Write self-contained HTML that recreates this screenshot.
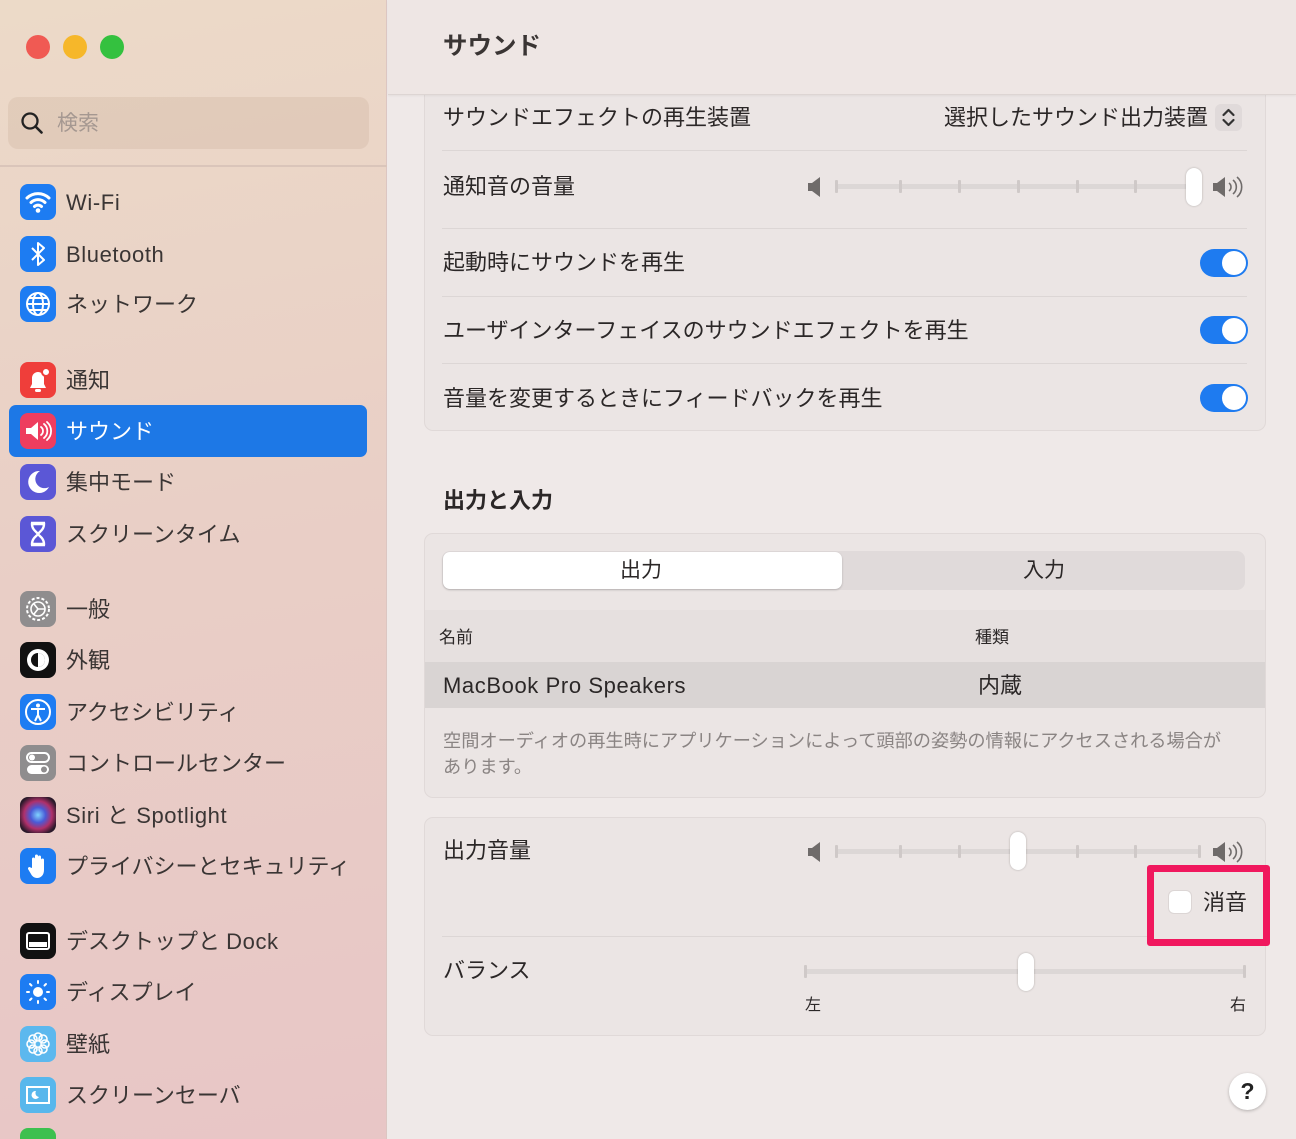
<!DOCTYPE html>
<html style="overflow:hidden;width:1296px;height:1139px"><head><meta charset="utf-8">
<style>
*{margin:0;padding:0;box-sizing:border-box}
body{width:1296px;height:1139px;overflow:hidden;position:relative;background:#efe9e8;font-family:"Liberation Sans","Noto Sans CJK JP",sans-serif;color:#2b2727}
.a{position:absolute}
#side{left:0;top:0;width:387px;height:1139px;background:linear-gradient(170deg,#ecdac8 0%,#e9cfc6 45%,#e8c6c6 100%);border-right:1px solid #dcc6c2}
.dot{width:24px;height:24px;border-radius:50%;top:35px}
.it{left:0;width:387px;height:40px}
.ic{position:absolute;left:20px;top:2px;width:36px;height:36px;border-radius:8px;overflow:hidden}
.ic svg{width:36px;height:36px}
.lb{position:absolute;left:66px;top:1px;line-height:40px;font-size:22px;color:#3a3534;white-space:nowrap}
.lat{letter-spacing:0.6px}
.card{background:#ebe5e4;border:1px solid #e0d9d8;border-radius:9px}
.t{font-size:22px;line-height:30px;white-space:nowrap;color:#2b2727}
.hr{height:1px;background:#dcd6d5;left:442px;width:805px}
.tog{width:48px;height:28px;border-radius:14px;background:#1e7bf0;left:1200px}
.tog::after{content:"";position:absolute;right:2px;top:2px;width:24px;height:24px;border-radius:50%;background:#fff}
.track{height:5px;background:#dcd7d6;border-radius:3px}
.tick{width:3px;height:13px;background:#cfc9c8;border-radius:1px}
.knob{width:16px;height:38px;background:#fff;border-radius:8px;box-shadow:0 0 2px rgba(0,0,0,.25)}
</style></head><body>
<div id="side" class="a"></div>
<div class="a dot" style="left:26px;background:#f05a53"></div>
<div class="a dot" style="left:63px;background:#f6b72a"></div>
<div class="a dot" style="left:100px;background:#34c13f"></div>
<div class="a" style="left:8px;top:97px;width:361px;height:52px;border-radius:10px;background:rgba(160,120,100,.13)"></div>
<svg class="a" style="left:19px;top:110px" width="26" height="26" viewBox="0 0 26 26"><circle cx="11" cy="11" r="7.5" fill="none" stroke="#222" stroke-width="2.3"/><path d="M16.5 16.5l6 6" stroke="#222" stroke-width="2.6" stroke-linecap="round"/></svg>
<div class="a" style="left:57px;top:110px;font-size:21px;line-height:28px;color:#a59891">検索</div>
<div class="a" style="left:0;top:165px;width:387px;height:2px;background:#dac5ba"></div>

<div class="a" style="left:9px;top:405px;width:358px;height:52px;border-radius:7px;background:#1d78e6"></div>

<div class="a it" style="top:182px"><div class="ic" style="background:#1d7cf2"><svg viewBox="0 0 36 36"><path d="M7 14a16 16 0 0 1 22 0M11 18.5a10 10 0 0 1 14 0M14.5 22.5a5 5 0 0 1 7 0" fill="none" stroke="#fff" stroke-width="3" stroke-linecap="round"/><circle cx="18" cy="26.5" r="2.3" fill="#fff"/></svg></div><div class="lb lat">Wi-Fi</div></div>
<div class="a it" style="top:234px"><div class="ic" style="background:#1d7cf2"><svg viewBox="0 0 36 36"><path d="M12 12l12 12-6 5V7l6 5-12 12" fill="none" stroke="#fff" stroke-width="2" stroke-linejoin="round"/></svg></div><div class="lb lat">Bluetooth</div></div>
<div class="a it" style="top:284px"><div class="ic" style="background:#1d7cf2"><svg viewBox="0 0 36 36"><g fill="none" stroke="#fff" stroke-width="2"><circle cx="18" cy="18" r="11"/><ellipse cx="18" cy="18" rx="5" ry="11"/><path d="M7 18h22M9 12h18M9 24h18"/></g></svg></div><div class="lb">ネットワーク</div></div>
<div class="a it" style="top:360px"><div class="ic" style="background:#ef3e3a"><svg viewBox="0 0 36 36"><path d="M10 26h16l-2-4v-6a6 6 0 0 0-12 0v6z" fill="#fff"/><circle cx="26" cy="10" r="4" fill="#fff" stroke="#ef3e3a" stroke-width="2"/><rect x="15" y="27" width="6" height="3" rx="1.5" fill="#fff"/></svg></div><div class="lb">通知</div></div>
<div class="a it" style="top:411px"><div class="ic" style="background:#ee3d5f"><svg viewBox="0 0 36 36"><path d="M6 15h5l7-6v18l-7-6H6z" fill="#fff"/><path d="M21 14a5 5 0 0 1 0 8M24 11a9 9 0 0 1 0 14M27 9a12 12 0 0 1 0 18" fill="none" stroke="#fff" stroke-width="1.8" stroke-linecap="round"/></svg></div><div class="lb" style="color:#fff">サウンド</div></div>
<div class="a it" style="top:462px"><div class="ic" style="background:#5b57d6"><svg viewBox="0 0 36 36"><path d="M20 7a11 11 0 1 0 9 16A9 9 0 0 1 20 7z" fill="#fff"/></svg></div><div class="lb">集中モード</div></div>
<div class="a it" style="top:514px"><div class="ic" style="background:#5b57d6"><svg viewBox="0 0 36 36"><path d="M11 7h14M11 29h14M12 8c0 6 5 8 6 10-1 2-6 4-6 10h12c0-6-5-8-6-10 1-2 6-4 6-10z" fill="none" stroke="#fff" stroke-width="2.4"/></svg></div><div class="lb">スクリーンタイム</div></div>
<div class="a it" style="top:589px"><div class="ic" style="background:#8f8d8e"><svg viewBox="0 0 36 36"><circle cx="18" cy="18" r="11" fill="none" stroke="#fff" stroke-width="2" stroke-dasharray="3 2"/><circle cx="18" cy="18" r="7" fill="none" stroke="#fff" stroke-width="1.6"/><path d="M18 18l-4-5M18 18h7M18 18l-4 5" stroke="#fff" stroke-width="1.6"/></svg></div><div class="lb">一般</div></div>
<div class="a it" style="top:640px"><div class="ic" style="background:#111"><svg viewBox="0 0 36 36"><circle cx="18" cy="18" r="11" fill="#fff"/><circle cx="18" cy="18" r="7" fill="#111"/><path d="M18 11a7 7 0 0 1 0 14z" fill="#fff"/></svg></div><div class="lb">外観</div></div>
<div class="a it" style="top:692px"><div class="ic" style="background:#1d7cf2"><svg viewBox="0 0 36 36"><circle cx="18" cy="18" r="12" fill="none" stroke="#fff" stroke-width="2"/><circle cx="18" cy="11.5" r="2" fill="#fff"/><path d="M11 15h14M18 15v6l-3 6M18 21l3 6" stroke="#fff" stroke-width="2" fill="none"/></svg></div><div class="lb">アクセシビリティ</div></div>
<div class="a it" style="top:743px"><div class="ic" style="background:#8f8d8e"><svg viewBox="0 0 36 36"><rect x="7" y="8" width="22" height="9" rx="4.5" fill="none" stroke="#fff" stroke-width="2"/><circle cx="12" cy="12.5" r="3" fill="#fff"/><rect x="7" y="20" width="22" height="9" rx="4.5" fill="#fff"/><circle cx="24" cy="24.5" r="3" fill="#8f8d8e"/></svg></div><div class="lb">コントロールセンター</div></div>
<div class="a it" style="top:795px"><div class="ic" style="background:radial-gradient(circle at 50% 50%,#7fd3ff 0%,#4a5ad6 30%,#b0306a 55%,#2a1a2a 80%)"></div><div class="lb lat">Siri と Spotlight</div></div>
<div class="a it" style="top:846px"><div class="ic" style="background:#1d7cf2"><svg viewBox="0 0 36 36"><path d="M12 20V11a1.5 1.5 0 0 1 3 0v7V8a1.5 1.5 0 0 1 3 0v10V9a1.5 1.5 0 0 1 3 0v10-7a1.5 1.5 0 0 1 3 0v10c0 5-3 8-7 8-3 0-5-2-6-4l-3-5a1.5 1.5 0 0 1 2.5-1.5z" fill="#fff"/></svg></div><div class="lb">プライバシーとセキュリティ</div></div>
<div class="a it" style="top:921px"><div class="ic" style="background:#111"><svg viewBox="0 0 36 36"><rect x="7" y="10" width="22" height="16" rx="2" fill="none" stroke="#fff" stroke-width="2"/><rect x="9" y="19" width="18" height="5" fill="#fff"/></svg></div><div class="lb">デスクトップと <span class="lat">Dock</span></div></div>
<div class="a it" style="top:972px"><div class="ic" style="background:#1d7cf2"><svg viewBox="0 0 36 36"><circle cx="18" cy="18" r="5" fill="#fff"/><g stroke="#fff" stroke-width="2" stroke-linecap="round"><path d="M18 7v2M18 27v2M7 18h2M27 18h2M10 10l1.5 1.5M24.5 24.5L26 26M10 26l1.5-1.5M24.5 11.5L26 10"/></g></svg></div><div class="lb">ディスプレイ</div></div>
<div class="a it" style="top:1024px"><div class="ic" style="background:#5cb8ee"><svg viewBox="0 0 36 36"><g fill="none" stroke="#fff" stroke-width="1.6"><circle cx="18" cy="11" r="4"/><circle cx="18" cy="25" r="4"/><circle cx="11" cy="18" r="4"/><circle cx="25" cy="18" r="4"/><circle cx="13" cy="13" r="4"/><circle cx="23" cy="23" r="4"/><circle cx="23" cy="13" r="4"/><circle cx="13" cy="23" r="4"/></g></svg></div><div class="lb">壁紙</div></div>
<div class="a it" style="top:1075px"><div class="ic" style="background:#58b7ec"><svg viewBox="0 0 36 36"><rect x="7" y="10" width="22" height="16" fill="none" stroke="#fff" stroke-width="2"/><path d="M16 14a4 4 0 1 0 3 6 4 4 0 0 1-3-6z" fill="#fff"/></svg></div><div class="lb">スクリーンセーバ</div></div>
<div class="a" style="left:20px;top:1128px;width:36px;height:11px;border-radius:8px 8px 0 0;background:#3dc04f"></div>

<!-- main -->
<div class="a card" style="left:424px;top:60px;width:842px;height:371px"></div>
<div class="a" style="left:388px;top:0;width:908px;height:95px;background:#eee6e4;border-bottom:1px solid #ddd5d3;box-shadow:0 1px 2px rgba(0,0,0,.05)"></div>
<div class="a" style="left:443px;top:31px;font-size:24.5px;font-weight:bold;line-height:32px;color:#3a3534">サウンド</div>

<div class="a t" style="left:443px;top:103px">サウンドエフェクトの再生装置</div>
<div class="a t" style="right:88px;top:103px">選択したサウンド出力装置</div>
<div class="a" style="left:1215px;top:104px;width:27px;height:27px;border-radius:6px;background:#e0dada"></div>
<svg class="a" style="left:1215px;top:104px" width="27" height="27"><path d="M8.5 11l5-5 5 5M8.5 16l5 5 5-5" fill="none" stroke="#333" stroke-width="2.2" stroke-linecap="round" stroke-linejoin="round"/></svg>
<div class="a hr" style="top:150px"></div>
<div class="a t" style="left:443px;top:172px">通知音の音量</div>
<div class="a hr" style="top:228px"></div>
<div class="a t" style="left:443px;top:248px">起動時にサウンドを再生</div>
<div class="a tog" style="top:249px"></div>
<div class="a hr" style="top:296px"></div>
<div class="a t" style="left:443px;top:316px">ユーザインターフェイスのサウンドエフェクトを再生</div>
<div class="a tog" style="top:316px"></div>
<div class="a hr" style="top:363px"></div>
<div class="a t" style="left:443px;top:384px">音量を変更するときにフィードバックを再生</div>
<div class="a tog" style="top:384px"></div>

<svg class="a" style="left:806px;top:176px" width="18" height="22"><path d="M2 7h4l8-6v20l-8-6H2z" fill="#6f6b6a"/></svg>
<div class="a track" style="left:836px;top:184px;width:360px"></div>
<div class="a tick" style="left:835px;top:180px"></div><div class="a tick" style="left:899px;top:180px"></div><div class="a tick" style="left:958px;top:180px"></div><div class="a tick" style="left:1017px;top:180px"></div><div class="a tick" style="left:1076px;top:180px"></div><div class="a tick" style="left:1134px;top:180px"></div>
<div class="a knob" style="left:1186px;top:168px"></div>
<svg class="a" style="left:1211px;top:175px" width="34" height="24"><path d="M2 8h4l8-6v20l-8-6H2z" fill="#6f6b6a"/><path d="M18 8a5 5 0 0 1 0 8M22 5a9 9 0 0 1 0 14M26 2a13 13 0 0 1 0 20" fill="none" stroke="#6f6b6a" stroke-width="1.6"/></svg>

<div class="a" style="left:443px;top:486px;font-size:22px;font-weight:bold;line-height:30px">出力と入力</div>

<div class="a card" style="left:424px;top:533px;width:842px;height:265px;overflow:hidden">
 <div class="a" style="left:0;top:76px;width:842px;height:52px;background:#e6e0df"></div>
 <div class="a" style="left:0;top:128px;width:842px;height:46px;background:#d9d4d3"></div>
</div>
<div class="a" style="left:442px;top:551px;width:803px;height:39px;border-radius:8px;background:#e0dada"></div>
<div class="a" style="left:443px;top:552px;width:399px;height:37px;border-radius:7px;background:#fff;box-shadow:0 1px 2px rgba(0,0,0,.2)"></div>
<div class="a t" style="left:620px;top:556px;font-size:21px">出力</div>
<div class="a t" style="left:1023px;top:556px;font-size:21px">入力</div>
<div class="a" style="left:439px;top:626px;font-size:17px;line-height:24px">名前</div>
<div class="a" style="left:975px;top:626px;font-size:17px;line-height:24px">種類</div>
<div class="a" style="left:443px;top:671px;font-size:22px;line-height:30px;letter-spacing:0.6px">MacBook Pro Speakers</div>
<div class="a" style="left:978px;top:671px;font-size:22px;line-height:30px">内蔵</div>
<div class="a" style="left:443px;top:728px;font-size:18.2px;line-height:26px;color:#8a8483;white-space:nowrap">空間オーディオの再生時にアプリケーションによって頭部の姿勢の情報にアクセスされる場合が<br>あります。</div>

<div class="a card" style="left:424px;top:817px;width:842px;height:219px"></div>
<div class="a t" style="left:443px;top:836px">出力音量</div>
<svg class="a" style="left:806px;top:841px" width="18" height="22"><path d="M2 7h4l8-6v20l-8-6H2z" fill="#6f6b6a"/></svg>
<div class="a track" style="left:836px;top:849px;width:365px"></div>
<div class="a tick" style="left:835px;top:845px"></div><div class="a tick" style="left:899px;top:845px"></div><div class="a tick" style="left:958px;top:845px"></div><div class="a tick" style="left:1076px;top:845px"></div><div class="a tick" style="left:1134px;top:845px"></div><div class="a tick" style="left:1198px;top:845px"></div>
<div class="a knob" style="left:1010px;top:832px"></div>
<svg class="a" style="left:1211px;top:840px" width="34" height="24"><path d="M2 8h4l8-6v20l-8-6H2z" fill="#6f6b6a"/><path d="M18 8a5 5 0 0 1 0 8M22 5a9 9 0 0 1 0 14M26 2a13 13 0 0 1 0 20" fill="none" stroke="#6f6b6a" stroke-width="1.6"/></svg>
<div class="a" style="left:1168px;top:890px;width:24px;height:24px;border-radius:6px;background:#fff;border:1px solid #dcd6d5"></div>
<div class="a t" style="left:1203px;top:888px">消音</div>
<div class="a" style="left:1147px;top:865px;width:123px;height:81px;border:7px solid #f0185e;border-radius:3px"></div>
<div class="a" style="left:442px;top:936px;width:705px;height:1px;background:#dcd6d5"></div>
<div class="a t" style="left:443px;top:956px">バランス</div>
<div class="a track" style="left:805px;top:969px;width:441px"></div>
<div class="a tick" style="left:804px;top:965px"></div><div class="a tick" style="left:1243px;top:965px"></div>
<div class="a knob" style="left:1018px;top:953px"></div>
<div class="a" style="left:805px;top:995px;font-size:16px;line-height:22px">左</div>
<div class="a" style="left:1230px;top:995px;font-size:16px;line-height:22px">右</div>

<div class="a" style="left:1229px;top:1073px;width:37px;height:37px;border-radius:50%;background:#fff;box-shadow:0 1px 3px rgba(0,0,0,.25);text-align:center;font-size:23px;font-weight:bold;line-height:37px;color:#222">?</div>
</body></html>
